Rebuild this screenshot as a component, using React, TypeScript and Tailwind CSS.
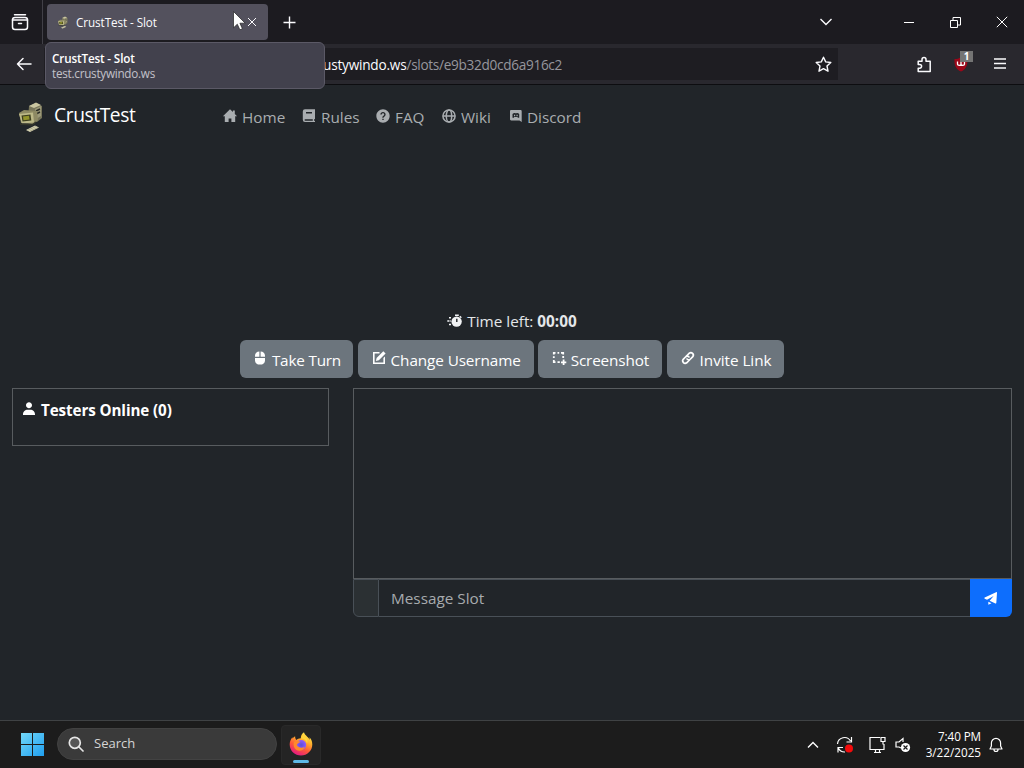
import React, { useState } from "react";
import { BiSolidHelpCircle, BiSolidPaperPlane, BiSolidUser } from "react-icons/bi";

// old computer with a keyboard, used by the favicon and the navbar brand
const ComputerLogo = ({ className }: { className: string }) => (
  <svg viewBox="0 0 28 32" className={className}>
    <path d="M12 5l7-3 6 3v12l-5 4-9-3z" fill="#77755a" />
    <path d="M12 5l7-3.500 5 2.500-7 3z" fill="#c9c5a0" />
    <path d="M18 8l6-3v10l-5 3z" fill="#9c9979" />
    <path d="M19 10l4-2M19 13l4-2" stroke="#2c2e27" strokeWidth="1.400" />
    <path d="M2 12l5-3 13 1 1 9-4 4-13-1z" fill="#8d8963" />
    <path d="M2 13l14-1.500 1 10-12 1z" fill="#bdb988" />
    <path d="M4.500 14.500l9-1 .8 6-8.800 1z" fill="#3e401f" />
    <path d="M6 15.500l6-.8.5 3.800-6 .7z" fill="#93942c" />
    <path d="M3 23l12 1 4-3" stroke="#33352a" fill="none" strokeWidth="1.500" />
    <path d="M9 29l9-4.500 4 2-9 4.500z" fill="#d9d6b5" />
    <path d="M11 29l8-3.500M13 30l8-3.500" stroke="#9c9879" strokeWidth=".7" />
  </svg>
);

const HomeIcon = () => (
  <svg viewBox="0 0 16 16" className="h-4 w-4" fill="currentColor">
    <path d="M8 1.300L.9 8.300h1.900V14h3.800v-3.600h2.800V14h3.800V8.300h1.900l-2.300-2.300V2.500h-1.900v1.600z" />
  </svg>
);

const BookIcon = () => (
  <svg viewBox="0 0 16 16" className="h-4 w-4" fill="currentColor">
    <path
      fillRule="evenodd"
      d="M4 1.300h10v9.900H13v1.500h1V14H4a2.200 2.200 0 01-2.200-2.200V3.500A2.200 2.200 0 014 1.300zM5 4v1.400h6V4zM4.200 11.300a.7.700 0 000 1.400h7.600v-1.400z"
    />
  </svg>
);

const GlobeIcon = () => (
  <svg viewBox="0 0 16 16" className="h-4 w-4" fill="none" stroke="currentColor" strokeWidth="1.500">
    <circle cx="8" cy="8" r="6.100" />
    <ellipse cx="8" cy="8" rx="2.700" ry="6.100" />
    <path d="M2 8h12" />
  </svg>
);

const DiscordIcon = () => (
  <svg viewBox="0 0 14 14" className="h-3.5 w-3.5" fill="currentColor">
    <path
      fillRule="evenodd"
      d="M2.200 1h9.300c.7 0 1.200.5 1.200 1.200V13l-2.200-1.600H2.200c-.7 0-1.200-.5-1.200-1.200v-8C1 1.500 1.500 1 2.200 1zM3.500 8.800V4.900c.8-.8 1.600-1 2.300-1l.3.400h1.500l.3-.4c.8 0 1.500.2 2.300 1v3.900H8.900l-.5-.7H5.300l-.5.700zM5 5.700v1.500h1.200V5.700zm2.500 0v1.500h1.200V5.700z"
    />
  </svg>
);

const TimerIcon = () => (
  <svg viewBox="0 0 16 16" className="h-4 w-4">
    <g fill="#f2f4f5">
      <circle cx="9.600" cy="8.600" r="5.200" />
      <path d="M8 1.400h3.800v1.700H8zM13.300 2.700l1.500 1.500-1 1-1.500-1.500z" />
      <path d="M2 4h2v1.500H2zM.3 7.300h1.900v1.500H.3zM2.700 7.300h1v1.500h-1zM2 10.700h2v1.500H2z" />
    </g>
    <path d="M9.800 5.700v3.300" stroke="#212529" strokeWidth="1.400" />
  </svg>
);

const MouseIcon = () => (
  <svg viewBox="0 0 16 16" className="h-4 w-4" fill="currentColor">
    <path d="M7.400 1.500v5.300H3V5.700c0-2.400 1.700-4.200 4.400-4.200zM8.600 1.500c2.700 0 4.400 1.800 4.400 4.200v1.100H8.600zM3 8h10v2.400c0 2.500-2 4.200-5 4.200s-5-1.700-5-4.200z" />
  </svg>
);

const EditIcon = () => (
  <svg viewBox="0 0 16 16" className="h-4 w-4" fill="currentColor">
    <path d="M8.500 2v1.600H3.600v8.800h8.800V8L14 6.400V14H2V2z" />
    <path d="M12.300 1.200l2.300 2.300-6.700 6.800-3 .7.700-3z" />
  </svg>
);

const ScreenshotIcon = () => (
  <svg viewBox="0 0 15 15" className="h-[15px] w-[15px]" fill="none" stroke="white" strokeWidth="1.800">
    <path d="M1.800 3.500V1.800h1.700M5.500 1.800h1.700M9 1.800h2.200v1.700M11.200 5v2M1.800 5.300v1.700M1.800 9v2.200h1.700M5.500 11.200h2.300" />
    <path d="M11.600 8.600v5.400M9 11.300h5.300" />
  </svg>
);

const LinkIcon = () => (
  <svg viewBox="0 0 16 16" className="h-4 w-4" fill="none" stroke="currentColor" strokeWidth="1.700" strokeLinecap="round">
    <path d="M6.500 6l2.800-2.800a2.500 2.500 0 013.500 3.500L10.500 9a2.500 2.500 0 01-3.500 0" />
    <path d="M9.500 10l-2.800 2.800a2.500 2.500 0 01-3.500-3.500L5.500 7A2.500 2.500 0 019 7" />
  </svg>
);

const FirefoxIcon = () => (
  <svg viewBox="0 0 24 24" className="h-6 w-6">
    <defs>
      <linearGradient id="fox" x1="0.800" y1="0" x2="0.300" y2="1">
        <stop offset="0" stopColor="#fff44f" />
        <stop offset="0.350" stopColor="#ffb02e" />
        <stop offset="0.650" stopColor="#ff5a36" />
        <stop offset="1" stopColor="#e31587" />
      </linearGradient>
      <radialGradient id="globe">
        <stop offset="0" stopColor="#5c4fd8" />
        <stop offset="1" stopColor="#9059ff" />
      </radialGradient>
    </defs>
    <path
      d="M3.400 5.300C1.400 7.600.6 10.200.7 12.800.9 19.200 5.900 23.500 12 23.500s11.300-4.700 11.300-11c0-3.500-1.400-6-2.900-7.300.3 1 .3 1.800.3 2.600C18.900 4.300 15.600 3.300 15 .3c-2.400 1.400-3.300 4-3.200 6-2 .1-3.300.7-4.400 1.600C6.500 7.100 6 5.600 6.100 4.200 5 4.700 4.200 5.600 3.600 6.500z"
      fill="url(#fox)"
    />
    <circle cx="12.200" cy="13" r="5" fill="url(#globe)" />
    <path d="M5 10c2-1.500 4.500-1.300 6.500-.2-1.400 1.500-3.300 1.300-3.700 3.300 1.600 3 5.500 3.200 8 1.600-1 3.500-5 5-8.300 3.200C4.800 16.500 4 13 5 10z" fill="#ff8a2b" />
    <path d="M12 6.300c3.200.3 5.600 2.200 6 5.200 1-1.700.7-4-1-5.700l-3-2.500z" fill="#ffd53a" />
  </svg>
);

const navLinks = [
  { label: "Home", icon: <HomeIcon />, width: "w-[79px]" },
  { label: "Rules", icon: <BookIcon />, width: "w-[74px]" },
  { label: "FAQ", icon: <BiSolidHelpCircle size={16} />, width: "w-[66px]" },
  { label: "Wiki", icon: <GlobeIcon />, width: "w-[68px]" },
  { label: "Discord", icon: <DiscordIcon />, width: "w-[80px]" },
];

const actions = [
  { label: "Take Turn", icon: <MouseIcon />, width: "w-[113px]", text: "tracking-[-0.200px]" },
  { label: "Change Username", icon: <EditIcon />, width: "w-[176px]", text: "tracking-[-0.100px]" },
  { label: "Screenshot", icon: <ScreenshotIcon />, width: "w-[124px]", text: "tracking-[-0.150px]" },
  { label: "Invite Link", icon: <LinkIcon />, width: "w-[117px]", text: "tracking-[-0.050px]" },
];

function TabBar() {
  return (
    <div className="flex h-11 items-center bg-[#1c1b20]">
      <div className="flex h-full w-[43px] items-center border-r border-[#414047] pl-[11px]">
        <svg width="18" height="18" viewBox="0 0 18 18" fill="none" stroke="#fbfbfe" strokeWidth="1.500" strokeLinecap="round">
          <path d="M3.500 1.800h11" />
          <rect x="1.500" y="4.500" width="15" height="12" rx="2.500" />
          <path d="M1.500 7h15M7.500 10.500h3" />
        </svg>
      </div>
      <div className="ml-1 flex h-9 w-[221px] items-center rounded bg-[#53515d] pl-[10px]">
        <ComputerLogo className="h-[13px] w-[12px]" />
        <span className="mt-[2px] ml-[7px] text-[11.700px] tracking-[-0.080px] text-[#fbfbfe]">CrustTest - Slot</span>
        <svg width="10" height="10" viewBox="0 0 10 10" stroke="#fbfbfe" className="mr-[11px] ml-auto">
          <path d="M1 1l8 8M9 1L1 9" />
        </svg>
      </div>
      <svg width="13" height="13" viewBox="0 0 13 13" stroke="#fbfbfe" strokeWidth="1.400" className="ml-[15px]">
        <path d="M6.500.5v12M.5 6.500h12" />
      </svg>
      <svg width="14" height="8" viewBox="0 0 14 8" fill="none" stroke="#fbfbfe" strokeWidth="1.400" className="ml-auto">
        <path d="M1.500 1L7 6.500 12.500 1" />
      </svg>
      <div className="ml-[71px] h-px w-[10px] bg-white" />
      <svg width="11" height="11" viewBox="0 0 11 11" fill="none" stroke="#fff" className="ml-[36px]">
        <path d="M.5 3.500h7v7h-7zM3 3V.5h7.500V8H8" />
      </svg>
      <svg width="12" height="12" viewBox="0 0 12 12" stroke="#fff" className="mr-[16px] ml-[35px]">
        <path d="M.8.8l10.400 10.400M11.200.8L.8 11.200" />
      </svg>
    </div>
  );
}

function Toolbar() {
  return (
    <div className="flex h-[41px] items-center border-b border-[#0d0d10] bg-[#29282e]">
      <svg width="16" height="14" viewBox="0 0 16 14" fill="none" stroke="#fbfbfe" strokeWidth="1.500" strokeLinecap="round" strokeLinejoin="round" className="ml-4">
        <path d="M15 7H1.500M7 1.500L1.500 7 7 12.500" />
      </svg>
      <div className="ml-3 flex h-8 w-[794px] items-center bg-[#1e1d22] pl-[279px]">
        <span className="mt-[3px] text-[13.600px] text-[#96969d]">
          <span className="tracking-[-0.200px] text-[#fbfbfe]">ustywindo.ws</span>
          <span className="tracking-[-0.300px]">/slots/e9b32d0cd6a916c2</span>
        </span>
        <svg width="17" height="17" viewBox="0 0 17 17" fill="none" stroke="#fbfbfe" strokeWidth="1.400" strokeLinejoin="round" className="mr-[6px] ml-auto">
          <path d="M8.500 1.200l2.200 4.700 5.100.6-3.800 3.500 1 5.200-4.500-2.600L4 15.200 5 10 1.200 6.500l5.100-.6z" />
        </svg>
      </div>
      <svg width="15" height="17" viewBox="0 0 15 17" fill="none" stroke="#fbfbfe" strokeWidth="1.500" strokeLinejoin="round" className="ml-[79px]">
        <path d="M1.200 5.200H5V3.500a2 2 0 014 0v1.700h4.200V15.500H1.200v-3.300h1.500a1.900 1.900 0 000-3.800H1.200z" />
      </svg>
      <div className="relative ml-[21px] h-5 w-5">
        <svg width="17" height="19" viewBox="0 0 17 19">
          <path d="M8 3c2 1.800 4 2 6.500 2 .3 6-1.500 10.500-6.500 12.500C3 15.500 1 11 1.500 5c2.500 0 4.500-.3 6.500-2z" fill="#9b0719" />
          <path d="M4.500 7.500v2.800c0 1.500 3.500 1.500 3.500 0V8v2.300c0 1.500 3.500 1.500 3.500 0V7.500" fill="none" stroke="#fff" strokeWidth="1.300" />
        </svg>
        <div className="absolute -top-[3px] left-[7px] flex h-[11px] w-[13px] items-center justify-center bg-[#747474] text-[10px] font-bold text-white">1</div>
      </div>
      <svg width="12" height="12" viewBox="0 0 12 12" stroke="#fbfbfe" strokeWidth="1.400" className="mr-[18px] ml-auto">
        <path d="M0 1h12M0 5.500h12M0 10h12" />
      </svg>
    </div>
  );
}

function Taskbar() {
  return (
    <div className="flex h-12 items-center border-t border-[#3f4244] bg-[#1c1c1c] text-white">
      <svg width="23" height="23" viewBox="0 0 23 23" className="ml-[21px]">
        <defs>
          <linearGradient id="win" x1="0" y1="0" x2="1" y2="1">
            <stop offset="0" stopColor="#72d8f8" />
            <stop offset="1" stopColor="#1f9eef" />
          </linearGradient>
        </defs>
        <path d="M0 0h11v11H0zM12 0h11v11H12zM0 12h11v11H0zM12 12h11v11H12z" fill="url(#win)" />
      </svg>
      <div className="-mt-px ml-[13px] flex h-8 w-[220px] items-center rounded-full border border-[#424242] bg-[#3a3a3a] pl-[10px]">
        <svg width="16" height="16" viewBox="0 0 16 16" fill="#555" stroke="#e6e6e6" strokeWidth="1.700" strokeLinecap="round">
          <circle cx="6.800" cy="6.800" r="5.500" />
          <path d="M11 11l4 4" />
        </svg>
        <span className="ml-[10px] text-[13px] text-[#d5d5d5]">Search</span>
      </div>
      <div className="ml-1 flex h-10 w-10 flex-col items-center rounded border border-[#292929] bg-[#242424] pt-[6px]">
        <FirefoxIcon />
        <div className="mt-[4px] h-[3px] w-4 shrink-0 rounded-full bg-[#5eb9e7]" />
      </div>
      <svg width="12" height="8" viewBox="0 0 12 8" fill="none" stroke="#fff" strokeWidth="1.400" className="ml-auto">
        <path d="M1 6.500l5-5 5 5" />
      </svg>
      <svg width="18" height="18" viewBox="0 0 18 18" fill="none" stroke="#fff" strokeWidth="1.200" className="ml-[17px]">
        <path d="M1.500 8A7 7 0 0114.500 5M15.500 1v5h-5M2 16.500v-5h5M2.300 12A7 7 0 009 16" />
        <circle cx="13" cy="12.500" r="4" fill="#f40b0b" stroke="none" />
      </svg>
      <svg width="17" height="18" viewBox="0 0 17 18" fill="none" stroke="#fff" strokeWidth="1.200" className="ml-[15px]">
        <path d="M11 1.500H1v12h14V8M5 16.500h7M6.500 13.500v3M10.500 13.500v3M12 1.500h4v4h-4zM14 5.500v3" />
      </svg>
      <svg width="16" height="16" viewBox="0 0 16 16" fill="none" stroke="#fff" strokeWidth="1.200" className="ml-[9px]">
        <path d="M6 11L4 10H1V5h3l4-3.500V5" />
        <circle cx="10.500" cy="10.500" r="4.600" fill="#fff" stroke="none" />
        <path d="M8.500 8.500l4 4M12.500 8.500l-4 4" stroke="#1c1c1c" />
      </svg>
      <div className="-mt-[2px] ml-[9px] w-[61px] text-right text-[11.700px] leading-4 whitespace-nowrap">
        <div className="tracking-[-0.100px]">7:40 PM</div>
        <div>3/22/2025</div>
      </div>
      <svg width="14" height="16" viewBox="0 0 14 16" fill="none" stroke="#fff" strokeWidth="1.200" strokeLinejoin="round" className="mr-[21px] ml-2">
        <path d="M1 12h12l-1.400-3V6a4.600 4.600 0 00-9.200 0v3zM5 12.500a2 2 0 004 0" />
      </svg>
    </div>
  );
}

export default function App() {
  const [message, setMessage] = useState("");

  return (
    <main className="relative flex h-[768px] w-[1024px] flex-col overflow-hidden bg-[#212529] font-['Open_Sans',sans-serif]">
      <TabBar />
      <Toolbar />

      <div className="flex-1 overflow-hidden">
        {/* Navbar */}
        <nav className="flex h-[64px] items-center pl-[17px]">
          <ComputerLogo className="h-[32px] w-[28px]" />
          <span className="-mt-[3px] ml-[9px] w-[168px] text-[19.200px] tracking-[-0.400px] text-white">CrustTest</span>
          {navLinks.map(link => (
            <a key={link.label} className={`flex items-center gap-1 text-[15.300px] text-[#a9adb0] ${link.width}`}>
              <span className="-mt-[2px] shrink-0">{link.icon}</span>
              {link.label}
            </a>
          ))}
        </nav>

        {/* Turn controls */}
        <div className="mt-[160px] flex h-6 items-center justify-center gap-1 text-[15.300px] text-[#e4e7e9]">
          <TimerIcon />
          <span>Time left: <b>00:00</b></span>
        </div>
        <div className="mt-[7px] flex justify-center gap-[4.700px]">
          {actions.map(action => (
            <button key={action.label} className={`flex h-[38px] items-center justify-center gap-1 rounded-md bg-[#6c757d] pt-[2px] text-[15.300px] whitespace-nowrap text-white ${action.width}`}>
              <span className="-mt-[4px] shrink-0">{action.icon}</span>
              <span className={action.text}>{action.label}</span>
            </button>
          ))}
        </div>

        {/* Users and chat */}
        <div className="mt-[10px] flex items-start gap-6 px-3">
          <div className="flex h-[58px] w-[317px] gap-1 border border-[#585c5f] pt-[9px] pl-2 text-[15.200px] leading-6 font-bold tracking-[-0.100px] text-white">
            <BiSolidUser size={16} className="mt-[3px]" />
            Testers Online (0)
          </div>
          <div className="w-[659px]">
            <div className="h-[191px] border border-[#585c5f]" />
            <div className="flex h-[38px]">
              <div className="w-[26px] rounded-bl-md border border-[#495057] bg-[#2b3033]" />
              <input
                value={message}
                onChange={e => setMessage(e.target.value)}
                placeholder="Message Slot"
                className="min-w-0 flex-1 border-y border-[#495057] bg-[#212529] px-3 text-[15.300px] text-white outline-none placeholder:text-[#a7abae]"
              />
              <button className="flex w-[42px] items-center justify-center rounded-br-md bg-[#0d6efd] text-white">
                <BiSolidPaperPlane size={16} />
              </button>
            </div>
          </div>
        </div>
      </div>

      <Taskbar />

      {/* Tab tooltip */}
      <div className="absolute top-[42px] left-[45px] h-[47px] w-[280px] rounded-md border border-[#5b5966] bg-[#42414d] pt-[7px] pl-[6px] text-[11.700px] leading-4 text-[#c3c2ca]">
        <div className="font-semibold tracking-[-0.150px] text-white">CrustTest - Slot</div>
        <div className="-mt-px tracking-[-0.250px]">test.crustywindo.ws</div>
      </div>

      {/* Mouse pointer */}
      <svg width="13" height="20" viewBox="0 0 13 20" className="absolute top-[11px] left-[233px]">
        <path d="M.5.5v16.300l3.800-3.600 2.600 5.600 2.500-1.100-2.500-5.500h5.300z" fill="#fff" stroke="#222" strokeWidth=".7" />
      </svg>
    </main>
  );
}
